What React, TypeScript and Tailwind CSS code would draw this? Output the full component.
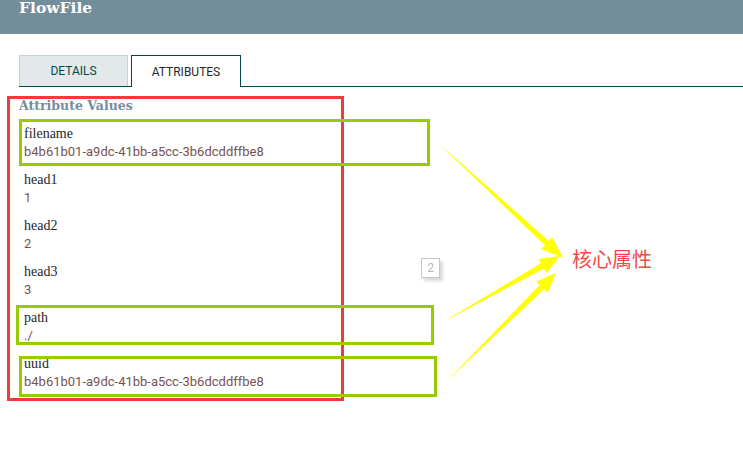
const ATTRIBUTES: { name: string; value: string }[] = [
  { name: "filename", value: "b4b61b01-a9dc-41bb-a5cc-3b6dcddffbe8" },
  { name: "head1", value: "1" },
  { name: "head2", value: "2" },
  { name: "head3", value: "3" },
  { name: "path", value: "./" },
  { name: "uuid", value: "b4b61b01-a9dc-41bb-a5cc-3b6dcddffbe8" },
];

const SLAB = "font-['DejaVu_Serif',serif]";

function Tabs() {
  return (
    <div className="mt-[21px] flex h-[32px] items-end gap-[3px] border-b border-[#004849]">
      <div className="flex h-[31px] w-[109px] items-center justify-center border border-b-0 border-[#c7d2d7] bg-[#e3e8eb] font-['Roboto',sans-serif] text-[12px] text-[#004849]">
        DETAILS
      </div>
      <div className="-mb-px flex h-[32px] w-[110px] items-center justify-center border border-b-0 border-[#004849] bg-white font-['Roboto',sans-serif] text-[12px] text-[#262626]">
        ATTRIBUTES
      </div>
    </div>
  );
}

function Arrows() {
  return (
    <svg className="pointer-events-none absolute left-0 top-0" width="743" height="462" aria-hidden="true">
      <polygon
        fill="#ffff00"
        points="436,141 548.9,240.9 552.3,237.2 563,258 541.5,249 544.9,245.3"
      />
      <polygon
        fill="#ffff00"
        points="443,322 541,263.3 538.6,258.9 560,256 546.4,272.9 544,268.5"
      />
      <polygon
        fill="#ffff00"
        points="446,382 539.7,285 536.2,281.4 556,273 547.4,292.8 543.9,289.2"
      />
    </svg>
  );
}

export default function App() {
  return (
    <div className="relative h-[462px] w-[743px] overflow-hidden bg-white">
      {/* dialog header */}
      <div className="flex h-[34px] items-start bg-[#728e9b] px-[19px]">
        <h1 className={`${SLAB} text-[15.5px] font-bold leading-[16px] text-white`}>FlowFile</h1>
      </div>

      <div className="pl-[19px]">
        <Tabs />

        <p className={`${SLAB} mt-[10px] text-[12.5px] font-bold leading-[18px] text-[#728e9b]`}>Attribute Values</p>

        <ul className="mt-[10px] flex flex-col gap-[10px] pl-[5px]">
          {ATTRIBUTES.map((attr) => (
            <li key={attr.name}>
              <div className="font-['Liberation_Serif',serif] text-[14px] leading-[18px] text-[#262626]">{attr.name}</div>
              <div className="font-['Roboto',sans-serif] text-[13px] leading-[18px] text-[#775351]">{attr.value}</div>
            </li>
          ))}
        </ul>
      </div>

      {/* annotations */}
      <div className="pointer-events-none absolute left-[7px] top-[96px] h-[305px] w-[337px] border-[3px] border-[#f33a3a]" />
      <div className="pointer-events-none absolute left-[19px] top-[119px] h-[47px] w-[411px] border-[3px] border-[#99cc00]" />
      <div className="pointer-events-none absolute left-[16px] top-[305px] h-[40px] w-[418px] border-[3px] border-[#99cc00]" />
      <div className="pointer-events-none absolute left-[19px] top-[356px] h-[41px] w-[418px] border-[3px] border-[#99cc00]" />

      <div className="absolute left-[421px] top-[258px] flex h-[20px] w-[19px] items-center justify-center border border-[#c8c8c8] bg-white font-['Roboto',sans-serif] text-[12px] text-[#b5b5b5] shadow-[3px_3px_3px_rgba(0,0,0,0.15)]">
        2
      </div>

      <Arrows />

      <span className="absolute left-[572px] top-[246px] font-['Noto_Sans_CJK_SC',sans-serif] text-[20px] leading-[26px] text-[#f24a4a]">
        核心属性
      </span>
    </div>
  );
}
